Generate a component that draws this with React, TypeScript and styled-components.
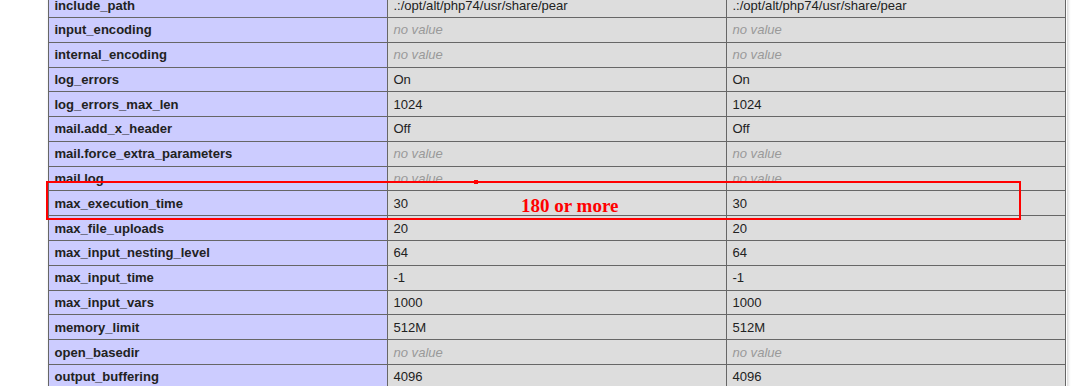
import { Fragment } from "react";
import styled, { createGlobalStyle } from "styled-components";

const GlobalStyle = createGlobalStyle`
  html, body {
    margin: 0;
    padding: 0;
    background: #fff;
  }
  body {
    color: #222;
    font-family: "Liberation Sans", Arial, sans-serif;
  }
`;

const Root = styled.div`
  position: relative;
  width: 1088px;
  height: 386px;
  overflow: hidden;
`;

// the page is scrolled: first row is partly cut off at the top
const Sheet = styled.div`
  margin-top: -7.79px;
  padding-left: 48px;
`;

const Table = styled.div`
  display: grid;
  grid-template-columns: repeat(3, 339px);
  grid-auto-rows: 24.79px;
  width: 1018px;
  border-left: 1px solid #666;
  border-top: 1px solid #666;
  box-shadow: 1px 2px 3px #ccc;
`;

const Cell = styled.div<{ $key?: boolean }>`
  box-sizing: border-box;
  border-right: 1px solid #666;
  border-bottom: 1px solid #666;
  padding: 4.36px 5.45px;
  font-size: 13.07px;
  line-height: normal;
  white-space: nowrap;
  overflow: hidden;
  background: ${(p) => (p.$key ? "#ccf" : "#ddd")};
  font-weight: ${(p) => (p.$key ? "bold" : "normal")};
`;

const NoValue = styled.i`
  color: #999;
`;

// screenshot annotation drawn over the table
const Highlight = styled.div`
  position: absolute;
  left: 46px;
  top: 181px;
  width: 975px;
  height: 39px;
  box-sizing: border-box;
  border: 2px solid #f00;
`;

const Handle = styled.div`
  position: absolute;
  left: 426px;
  top: -3px;
  width: 4px;
  height: 4px;
  background: #f00;
`;

const Note = styled.span`
  position: absolute;
  left: 473px;
  top: 13px;
  font-family: "Liberation Serif", "Times New Roman", serif;
  font-weight: bold;
  font-size: 19px;
  line-height: 19px;
  color: #f00;
  white-space: nowrap;
`;

type Row = [string, string | null];

const rows: Row[] = [
  ["include_path", ".:/opt/alt/php74/usr/share/pear"],
  ["input_encoding", null],
  ["internal_encoding", null],
  ["log_errors", "On"],
  ["log_errors_max_len", "1024"],
  ["mail.add_x_header", "Off"],
  ["mail.force_extra_parameters", null],
  ["mail.log", null],
  ["max_execution_time", "30"],
  ["max_file_uploads", "20"],
  ["max_input_nesting_level", "64"],
  ["max_input_time", "-1"],
  ["max_input_vars", "1000"],
  ["memory_limit", "512M"],
  ["open_basedir", null],
  ["output_buffering", "4096"],
];

function Value({ v }: { v: string | null }) {
  return <Cell>{v === null ? <NoValue>no value</NoValue> : v}</Cell>;
}

export default function App() {
  return (
    <Root>
      <GlobalStyle />
      <Sheet>
        <Table>
          {rows.map(([k, v]) => (
            <Fragment key={k}>
              <Cell $key>{k}</Cell>
              <Value v={v} />
              <Value v={v} />
            </Fragment>
          ))}
        </Table>
      </Sheet>
      <Highlight>
        <Handle />
        <Note>180 or more</Note>
      </Highlight>
    </Root>
  );
}
